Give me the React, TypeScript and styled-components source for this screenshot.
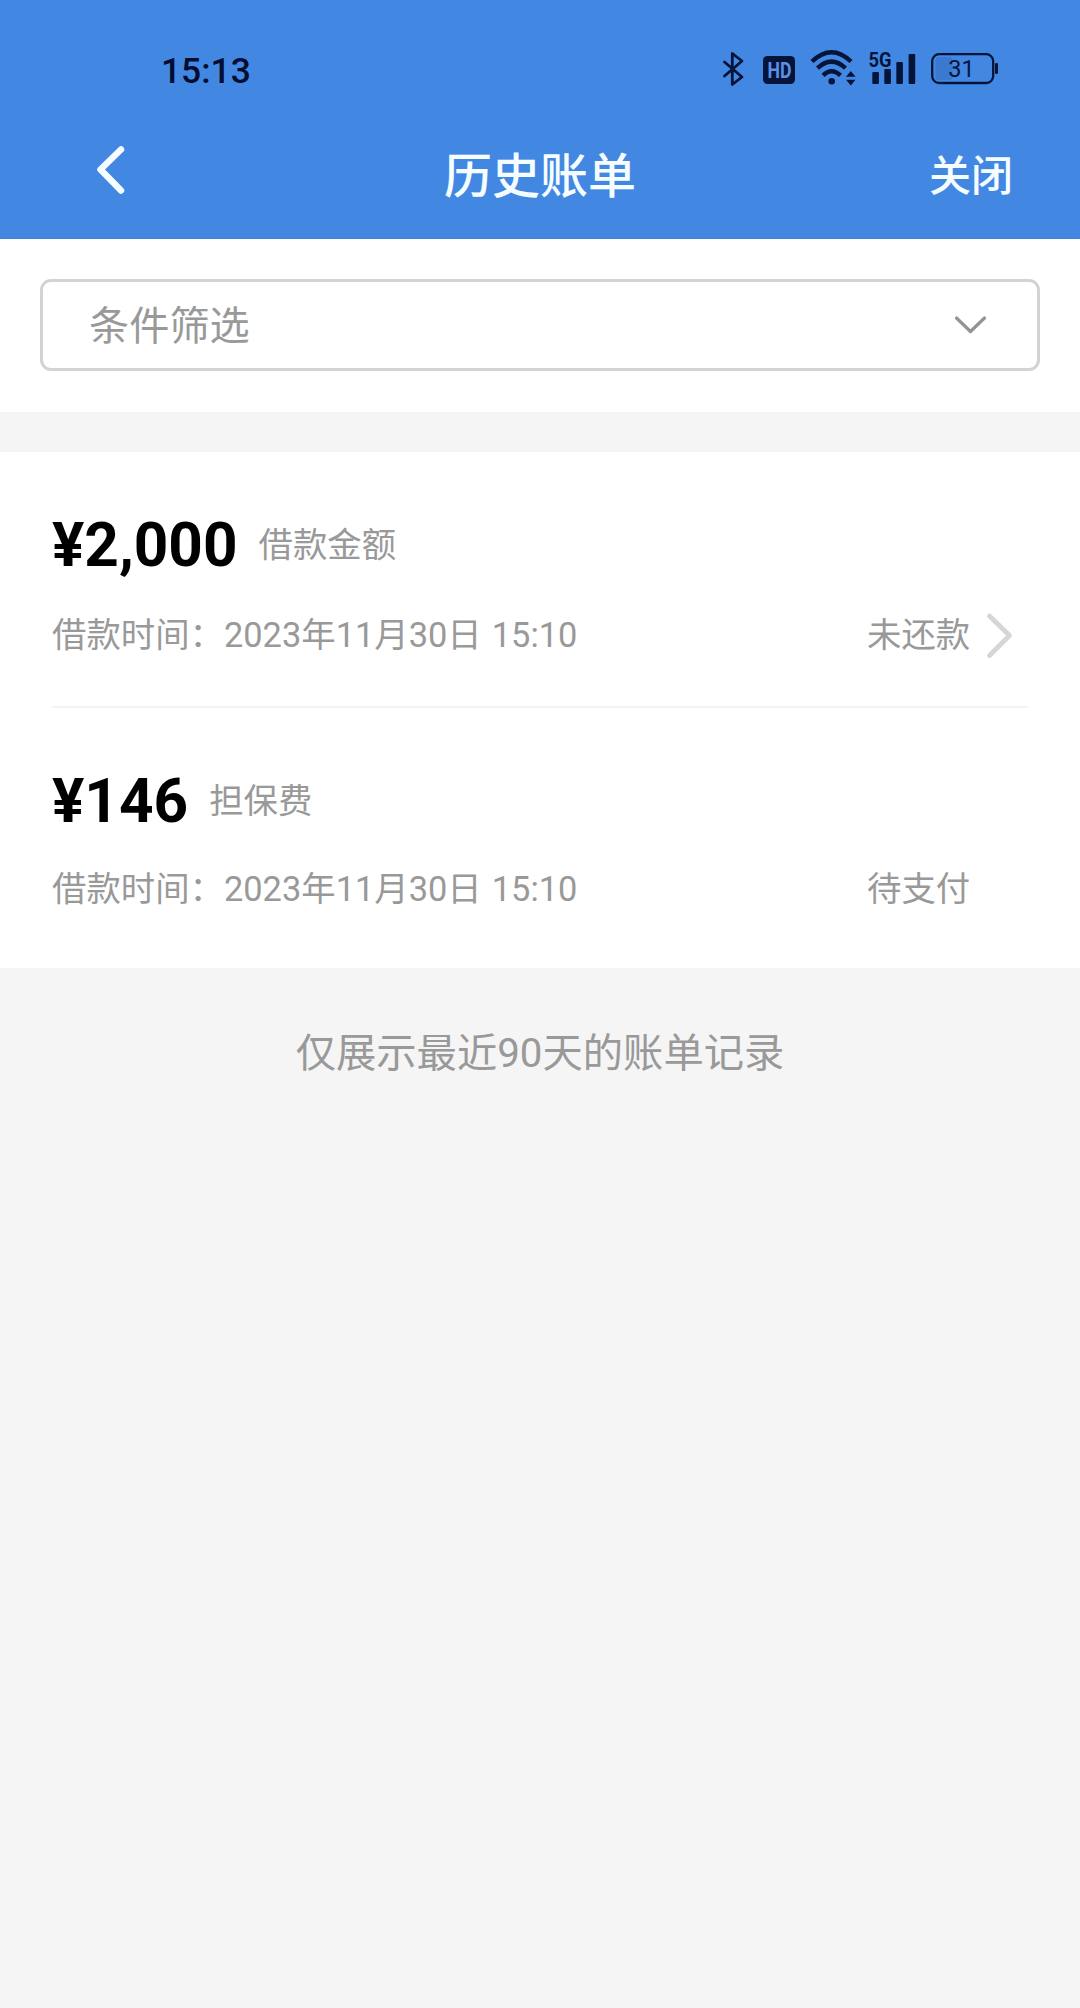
import React from "react";
import styled, { createGlobalStyle } from "styled-components";

const INK = "#06143a";
const BLUE = "#4288e3";
const GREY = "#999999";

const GlobalStyle = createGlobalStyle`
  * { box-sizing: border-box; }
  body {
    margin: 0;
    background: #f5f5f5;
    font-family: Roboto, "Noto Sans CJK SC", sans-serif;
  }
`;

const Page = styled.div`
  width: 1080px;
  min-height: 2008px;
  display: flex;
  flex-direction: column;
  background: #f5f5f5;
`;

const Header = styled.header`
  height: 239px;
  background: ${BLUE};
  border-bottom: 1px solid #4083d3;
`;

const StatusBar = styled.div`
  display: flex;
  justify-content: space-between;
  align-items: flex-start;
  height: 104px;
  padding: 49px 81px 0 161px;
`;

const Clock = styled.span`
  padding-top: 1px;
  font-size: 35.4px;
  line-height: 43px;
  font-weight: 500;
  color: #040c30;
`;

const StatusIcons = styled.div`
  display: flex;
  height: 40px;
`;

const Glyph = styled.svg<{ $gap?: number }>`
  display: block;
  flex: none;
  overflow: visible;
  margin-left: ${(p) => p.$gap ?? 0}px;
`;

const IconText = styled.text<{ $size: number; $weight: number; $color?: string }>`
  font-family: Roboto, sans-serif;
  font-size: ${(p) => p.$size}px;
  font-weight: ${(p) => p.$weight};
  fill: ${(p) => p.$color ?? INK};
`;

const NavBar = styled.nav`
  display: grid;
  grid-template-columns: 1fr auto 1fr;
  align-items: center;
  height: 135px;
  padding: 10px 67px 0 94px;
`;

const BackButton = styled.button`
  justify-self: start;
  display: flex;
  padding: 0;
  margin-top: -15px;
  border: 0;
  background: none;
`;

const Title = styled.h1`
  margin: 0 0 0 -27px;
  font-size: 48px;
  line-height: 60px;
  font-weight: 500;
  color: #f6fdff;
`;

const CloseButton = styled.button`
  justify-self: end;
  padding: 0;
  margin-top: 1px;
  border: 0;
  background: none;
  font-family: inherit;
  font-size: 42px;
  line-height: 60px;
  font-weight: 500;
  color: #f6fdff;
`;

const FilterSection = styled.section`
  height: 173px;
  padding: 40px 40px 0;
  background: #fff;
`;

const FilterBox = styled.div`
  display: flex;
  align-items: center;
  justify-content: space-between;
  height: 92px;
  padding: 0 50px 0 46px;
  border: 3px solid #d3d3d3;
  border-radius: 11px;
`;

const FilterLabel = styled.span`
  padding-top: 3px;
  font-size: 40.2px;
  line-height: 60px;
  color: ${GREY};
`;

const BillList = styled.ul`
  margin: 40px 0 0;
  padding: 0 52px;
  list-style: none;
  background: #fff;
`;

const BillItem = styled.li<{ $gap: number; $bottom: number; $divided?: boolean }>`
  display: flex;
  flex-direction: column;
  gap: ${(p) => p.$gap}px;
  padding: 63px 0 ${(p) => p.$bottom}px;
  border-bottom: ${(p) => (p.$divided ? "2px solid #f3f3f3" : "0")};
`;

const AmountLine = styled.div`
  display: flex;
  align-items: center;
  height: 60px;
  gap: 21px;
`;

const Amount = styled.strong`
  padding-top: 2px;
  font-size: 60.3px;
  line-height: 60px;
  font-weight: 700;
  color: #000;
`;

const Label = styled.span<{ $drop?: number }>`
  padding-top: ${(p) => p.$drop ?? 0}px;
  font-size: 34.4px;
  line-height: 50px;
  word-spacing: 1.5px;
  color: ${GREY};
`;

const MetaLine = styled.div`
  display: grid;
  grid-template-columns: 1fr 119px 42px;
  align-items: center;
  height: 50px;
`;

const Note = styled.p`
  margin: 56px 0 0;
  text-align: center;
  font-size: 40.3px;
  line-height: 60px;
  color: ${GREY};
`;

function Bluetooth() {
  return (
    <Glyph width="24" height="40" viewBox="721 49 24 40" fill="none" stroke={INK} strokeWidth="2.8" strokeLinejoin="round" strokeLinecap="round">
      <path d="M724.500 62L742 77L732.300 84.500V53.500L742 61L724.500 76" />
    </Glyph>
  );
}

function HdBadge() {
  return (
    <Glyph $gap={18} width="32" height="40" viewBox="763 49 32 40">
      <rect x="763" y="56" width="32" height="28" rx="4.500" fill={INK} />
      <IconText x="767.500" y="78" $size={22.5} $weight={700} $color="#5b90e4" textLength="24" lengthAdjust="spacingAndGlyphs">HD</IconText>
    </Glyph>
  );
}

function Wifi() {
  return (
    <Glyph $gap={15} width="46" height="40" viewBox="810 49 46 40" fill="none" stroke={INK} strokeWidth="4.400">
      <path d="M812 61.500Q831.500 43 851 61.500" />
      <path d="M817.500 68.200Q831.500 55 845.500 68.200" />
      <path d="M823 75.400Q831.500 67 840.500 75.400" />
      <circle cx="831.700" cy="81.300" r="3.300" fill={INK} stroke="none" />
      <path d="M850.800 71L855.500 76.800H846ZM850.800 85.500L846 79.800H855.500Z" fill={INK} stroke="none" />
    </Glyph>
  );
}

function Signal() {
  return (
    <Glyph $gap={12} width="48" height="40" viewBox="868 49 48 40" fill={INK}>
      <IconText x="868.500" y="67" $size={20.5} $weight={700} textLength="23" lengthAdjust="spacingAndGlyphs">5G</IconText>
      <rect x="872.300" y="72" width="6.600" height="12" rx="1" />
      <rect x="884.300" y="69" width="6.600" height="15" rx="1" />
      <rect x="896.300" y="62" width="6.600" height="22" rx="1" />
      <rect x="908.600" y="54" width="6.600" height="30" rx="1" />
    </Glyph>
  );
}

function Battery() {
  return (
    <Glyph $gap={15} width="68" height="40" viewBox="931 49 68 40">
      <rect x="935.500" y="57" width="17" height="23" rx="3" fill="#3b78d0" />
      <rect x="932.200" y="54.200" width="61" height="28.800" rx="7" fill="none" stroke={INK} strokeWidth="2.300" />
      <rect x="995" y="63" width="3" height="11" rx="1.300" fill={INK} />
      <IconText x="961.500" y="77" $size={23.5} $weight={400} textAnchor="middle">31</IconText>
    </Glyph>
  );
}

interface Bill {
  amount: string;
  kind: string;
  time: string;
  status: string;
  gap: number;
  bottom: number;
  open?: boolean;
}

const bills: Bill[] = [
  { amount: "¥2,000", kind: "借款金额", time: "2023年11月30日 15:10", status: "未还款", gap: 34, bottom: 47, open: true },
  { amount: "¥146", kind: "担保费", time: "2023年11月30日 15:10", status: "待支付", gap: 32, bottom: 55 },
];

export default function App() {
  return (
    <Page>
      <GlobalStyle />
      <Header>
        <StatusBar>
          <Clock>15:13</Clock>
          <StatusIcons>
            <Bluetooth />
            <HdBadge />
            <Wifi />
            <Signal />
            <Battery />
          </StatusIcons>
        </StatusBar>
        <NavBar>
          <BackButton aria-label="返回">
            <Glyph width="32" height="52" viewBox="94 143 32 52" fill="none" stroke="#f6fdff" strokeWidth="6.500" strokeLinecap="round" strokeLinejoin="round">
              <path d="M121 149.500L100.500 169.500L121 190.500" />
            </Glyph>
          </BackButton>
          <Title>历史账单</Title>
          <CloseButton>关闭</CloseButton>
        </NavBar>
      </Header>
      <FilterSection>
        <FilterBox>
          <FilterLabel>条件筛选</FilterLabel>
          <Glyph width="34" height="20" viewBox="953 315 34 20" fill="none" stroke="#939393" strokeWidth="3.200" strokeLinecap="round" strokeLinejoin="round">
            <path d="M956.500 318L970.500 331.500L984.500 318" />
          </Glyph>
        </FilterBox>
      </FilterSection>
      <BillList>
        {bills.map((b) => (
          <BillItem key={b.amount} $gap={b.gap} $bottom={b.bottom} $divided={b.open}>
            <AmountLine>
              <Amount>{b.amount}</Amount>
              <Label>{b.kind}</Label>
            </AmountLine>
            <MetaLine>
              <Label>借款时间：{b.time}</Label>
              <Label $drop={1}>{b.status}</Label>
              {b.open && (
                <Glyph width="30" height="50" viewBox="985 609 30 50" fill="none" stroke="#d6d6d6" strokeWidth="4.800" strokeLinecap="round" strokeLinejoin="round">
                  <path d="M988.500 615L1008.500 634.500L988.500 654.500" />
                </Glyph>
              )}
            </MetaLine>
          </BillItem>
        ))}
      </BillList>
      <Note>仅展示最近90天的账单记录</Note>
    </Page>
  );
}
